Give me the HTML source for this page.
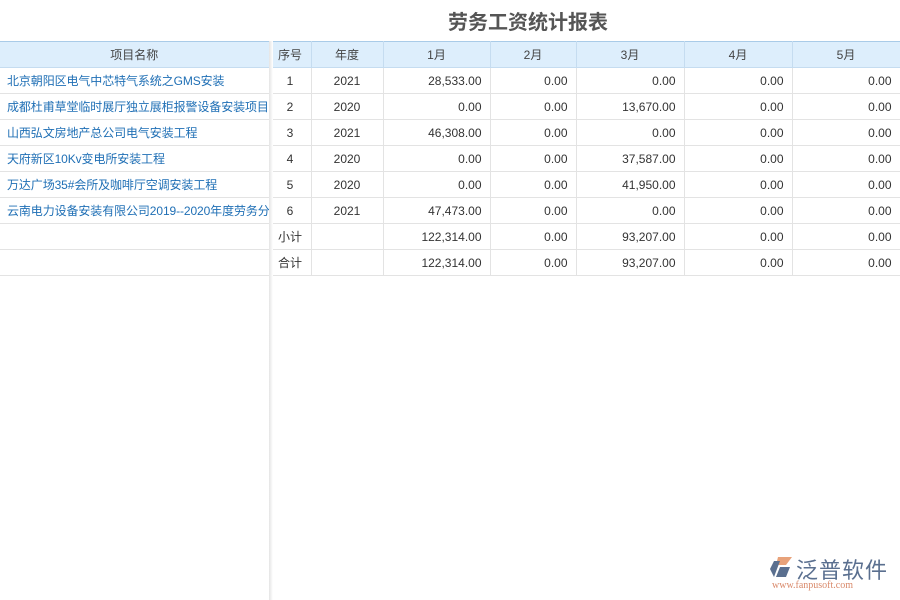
<!DOCTYPE html>
<html><head><meta charset="utf-8"><style>
body{margin:0;width:900px;height:600px;background:#fff;font-family:"Liberation Sans","Noto Sans CJK SC",sans-serif;position:relative;overflow:hidden}
.title{position:absolute;left:0;width:1056px;top:6px;text-align:center;font-size:20px;font-weight:bold;color:#555}
table{position:absolute;top:41px;left:0;width:900px;border-collapse:collapse;font-size:12px;color:#333;table-layout:fixed}
td,th{box-sizing:border-box;height:26px;padding:0 8px;border-bottom:1px solid #e3e3e3;border-right:1px solid #e3e3e3;white-space:nowrap;overflow:hidden}
th{background:#ddeefc;font-weight:normal;color:#444;border-color:#c5dcf0;border-top:1px solid #a9cbe8}
td.n{color:#1f6fb5;padding:0 0 0 7px;letter-spacing:-0.1px}
td.c{text-align:center;padding:0}
td.r{text-align:right;padding-right:8px}
.sh{position:absolute;left:269px;top:41px;width:4px;height:559px;background:linear-gradient(90deg,#e4e4e4,#fff)}
.logo{position:absolute;left:768px;top:553px}
</style></head><body>
<div class="title">劳务工资统计报表</div>
<table>
<colgroup><col style="width:269px"><col style="width:42px"><col style="width:72px"><col style="width:107px"><col style="width:86px"><col style="width:108px"><col style="width:108px"><col style="width:108px"></colgroup>
<tr><th>项目名称</th><th>序号</th><th>年度</th><th>1月</th><th>2月</th><th>3月</th><th>4月</th><th>5月</th></tr>
<tr><td class="n">北京朝阳区电气中芯特气系统之GMS安装</td><td class="c">1</td><td class="c">2021</td><td class="r">28,533.00</td><td class="r">0.00</td><td class="r">0.00</td><td class="r">0.00</td><td class="r">0.00</td></tr>
<tr><td class="n">成都杜甫草堂临时展厅独立展柜报警设备安装项目</td><td class="c">2</td><td class="c">2020</td><td class="r">0.00</td><td class="r">0.00</td><td class="r">13,670.00</td><td class="r">0.00</td><td class="r">0.00</td></tr>
<tr><td class="n">山西弘文房地产总公司电气安装工程</td><td class="c">3</td><td class="c">2021</td><td class="r">46,308.00</td><td class="r">0.00</td><td class="r">0.00</td><td class="r">0.00</td><td class="r">0.00</td></tr>
<tr><td class="n">天府新区10Kv变电所安装工程</td><td class="c">4</td><td class="c">2020</td><td class="r">0.00</td><td class="r">0.00</td><td class="r">37,587.00</td><td class="r">0.00</td><td class="r">0.00</td></tr>
<tr><td class="n">万达广场35#会所及咖啡厅空调安装工程</td><td class="c">5</td><td class="c">2020</td><td class="r">0.00</td><td class="r">0.00</td><td class="r">41,950.00</td><td class="r">0.00</td><td class="r">0.00</td></tr>
<tr><td class="n">云南电力设备安装有限公司2019--2020年度劳务分</td><td class="c">6</td><td class="c">2021</td><td class="r">47,473.00</td><td class="r">0.00</td><td class="r">0.00</td><td class="r">0.00</td><td class="r">0.00</td></tr>
<tr><td></td><td class="c">小计</td><td></td><td class="r">122,314.00</td><td class="r">0.00</td><td class="r">93,207.00</td><td class="r">0.00</td><td class="r">0.00</td></tr>
<tr><td></td><td class="c">合计</td><td></td><td class="r">122,314.00</td><td class="r">0.00</td><td class="r">93,207.00</td><td class="r">0.00</td><td class="r">0.00</td></tr>
</table>
<div class="sh"></div>
<div class="logo">
<svg width="28" height="24" style="position:absolute;left:0;top:2px"><path d="M10 2 L24 2 L18 10 L8 10 Z" fill="#e8a27a"/><path d="M6 6 L12 6 L6 22 L2 14 Z" fill="#5a6f8f"/><path d="M12 12 L22 12 L18 22 L8 22 Z" fill="#5a6f8f"/></svg>
<div style="position:absolute;left:28px;top:0;font-size:22px;color:#5a6f8f;white-space:nowrap;letter-spacing:1px">泛普软件</div>
<div style="position:absolute;left:4px;top:27px;font-size:10px;color:#d9896a;font-family:'Liberation Serif',serif;white-space:nowrap">www.fanpusoft.com</div>
</div>
</body></html>
